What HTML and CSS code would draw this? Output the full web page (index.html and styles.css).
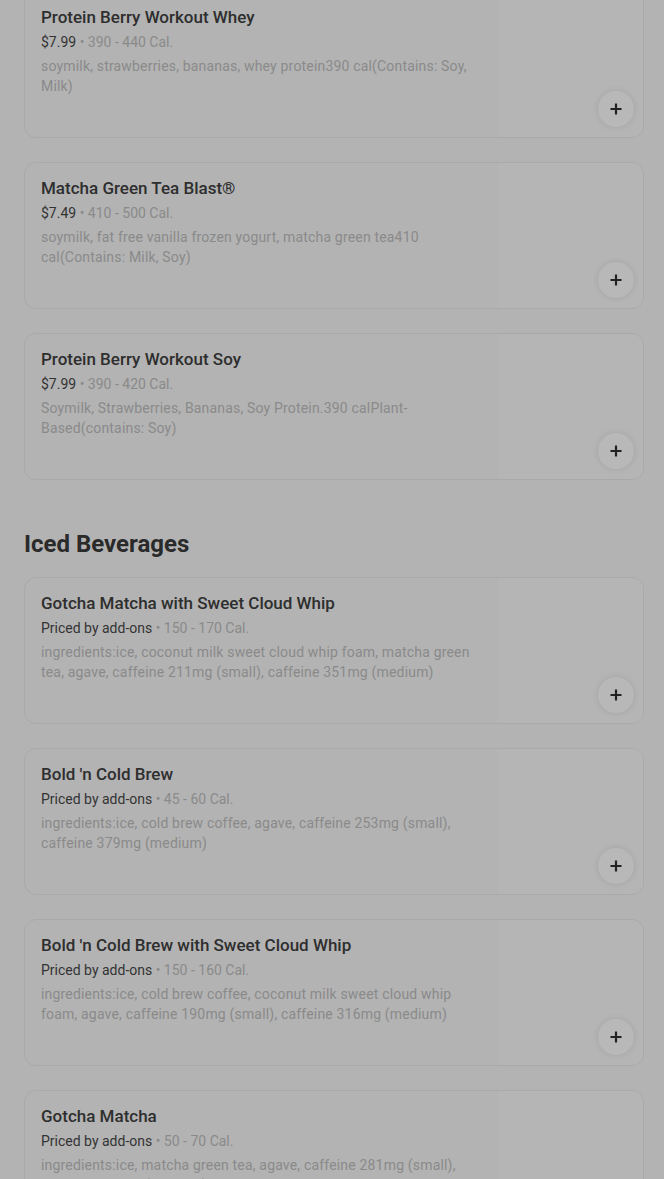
FILE: index.html
```html
<!DOCTYPE html>
<html lang="en">
<head>
<meta charset="utf-8">
<title>Menu</title>
<link rel="stylesheet" href="styles.css">
</head>
<body>
<main class="page">
  <section class="section first">
    <div class="list">
      <article class="card">
        <div class="info">
          <h3 class="name">Protein Berry Workout Whey</h3>
          <p class="meta"><span class="price">$7.99</span> • 390 - 440 Cal.</p>
          <p class="desc">soymilk, strawberries, bananas, whey protein390 cal(Contains: Soy, Milk)</p>
        </div>
        <div class="media"><button class="add" aria-label="Add"><svg viewBox="0 0 12 12" width="12" height="12"><path d="M6 0.5v11M0.5 6h11" stroke="#222" stroke-width="2.2" fill="none"/></svg></button></div>
      </article>
      <article class="card">
        <div class="info">
          <h3 class="name">Matcha Green Tea Blast®</h3>
          <p class="meta"><span class="price">$7.49</span> • 410 - 500 Cal.</p>
          <p class="desc">soymilk, fat free vanilla frozen yogurt, matcha green tea410 cal(Contains: Milk, Soy)</p>
        </div>
        <div class="media"><button class="add" aria-label="Add"><svg viewBox="0 0 12 12" width="12" height="12"><path d="M6 0.5v11M0.5 6h11" stroke="#222" stroke-width="2.2" fill="none"/></svg></button></div>
      </article>
      <article class="card">
        <div class="info">
          <h3 class="name">Protein Berry Workout Soy</h3>
          <p class="meta"><span class="price">$7.99</span> • 390 - 420 Cal.</p>
          <p class="desc">Soymilk, Strawberries, Bananas, Soy Protein.390 calPlant-Based(contains: Soy)</p>
        </div>
        <div class="media"><button class="add" aria-label="Add"><svg viewBox="0 0 12 12" width="12" height="12"><path d="M6 0.5v11M0.5 6h11" stroke="#222" stroke-width="2.2" fill="none"/></svg></button></div>
      </article>
    </div>
  </section>

  <section class="section">
    <h2 class="section-title">Iced Beverages</h2>
    <div class="list">
      <article class="card">
        <div class="info">
          <h3 class="name">Gotcha Matcha with Sweet Cloud Whip</h3>
          <p class="meta"><span class="price">Priced by add-ons</span> • 150 - 170 Cal.</p>
          <p class="desc">ingredients:ice, coconut milk sweet cloud whip foam, matcha green tea, agave, caffeine 211mg (small), caffeine 351mg (medium)</p>
        </div>
        <div class="media"><button class="add" aria-label="Add"><svg viewBox="0 0 12 12" width="12" height="12"><path d="M6 0.5v11M0.5 6h11" stroke="#222" stroke-width="2.2" fill="none"/></svg></button></div>
      </article>
      <article class="card">
        <div class="info">
          <h3 class="name">Bold 'n Cold Brew</h3>
          <p class="meta"><span class="price">Priced by add-ons</span> • 45 - 60 Cal.</p>
          <p class="desc">ingredients:ice, cold brew coffee, agave, caffeine 253mg (small), caffeine 379mg (medium)</p>
        </div>
        <div class="media"><button class="add" aria-label="Add"><svg viewBox="0 0 12 12" width="12" height="12"><path d="M6 0.5v11M0.5 6h11" stroke="#222" stroke-width="2.2" fill="none"/></svg></button></div>
      </article>
      <article class="card">
        <div class="info">
          <h3 class="name">Bold 'n Cold Brew with Sweet Cloud Whip</h3>
          <p class="meta"><span class="price">Priced by add-ons</span> • 150 - 160 Cal.</p>
          <p class="desc">ingredients:ice, cold brew coffee, coconut milk sweet cloud whip foam, agave, caffeine 190mg (small), caffeine 316mg (medium)</p>
        </div>
        <div class="media"><button class="add" aria-label="Add"><svg viewBox="0 0 12 12" width="12" height="12"><path d="M6 0.5v11M0.5 6h11" stroke="#222" stroke-width="2.2" fill="none"/></svg></button></div>
      </article>
      <article class="card">
        <div class="info">
          <h3 class="name">Gotcha Matcha</h3>
          <p class="meta"><span class="price">Priced by add-ons</span> • 50 - 70 Cal.</p>
          <p class="desc">ingredients:ice, matcha green tea, agave, caffeine 281mg (small), caffeine 421mg (medium)</p>
        </div>
        <div class="media"><button class="add" aria-label="Add"><svg viewBox="0 0 12 12" width="12" height="12"><path d="M6 0.5v11M0.5 6h11" stroke="#222" stroke-width="2.2" fill="none"/></svg></button></div>
      </article>
    </div>
  </section>
</main>
</body>
</html>
```

FILE: styles.css
```css
* { box-sizing: border-box; }
html, body { margin: 0; padding: 0; }
body {
  background: #b3b3b3;
  font-family: Roboto, "Liberation Sans", sans-serif;
  color: #2b2b2b;
  overflow: hidden;
}
.page {
  padding: 0 20px 0 24px;
  margin-top: -9px;
}
.section { margin-top: 48px; }
.section.first { margin-top: 0; }
.section-title {
  margin: 0 0 17px;
  font-size: 24px;
  line-height: 32px;
  font-weight: 700;
  letter-spacing: 0;
  color: #2a2a2a;
}
.list {
  display: flex;
  flex-direction: column;
  gap: 24px;
}
.card {
  display: flex;
  border: 1px solid #a9a9a9;
  border-radius: 12px;
  background: #b3b3b3;
  overflow: hidden;
}
.info {
  flex: 1;
  padding: 13px 16px 0 16px;
  min-width: 0;
}
.name {
  margin: 0;
  font-size: 17px;
  line-height: 24px;
  font-weight: 500;
  color: #2e2e2e;
}
.meta {
  margin: 3px 0 0;
  font-size: 14px;
  line-height: 20px;
  color: #8a8a8a;
}
.price { color: #333333; }
.desc {
  margin: 4px 0 0;
  font-size: 14px;
  line-height: 20px;
  letter-spacing: 0.18px;
  color: #8a8a8a;
}
.media {
  width: 145px;
  height: 145px;
  flex: none;
  display: flex;
  justify-content: flex-end;
  align-items: flex-end;
  padding: 0 9px 10px 0;
  background: #b5b5b5;
}
.add {
  width: 36px;
  height: 36px;
  border-radius: 50%;
  border: none;
  padding: 0;
  background: #b8b8b8;
  box-shadow: 0 0 6px rgba(0,0,0,0.1);
  display: flex;
  align-items: center;
  justify-content: center;
}
```
